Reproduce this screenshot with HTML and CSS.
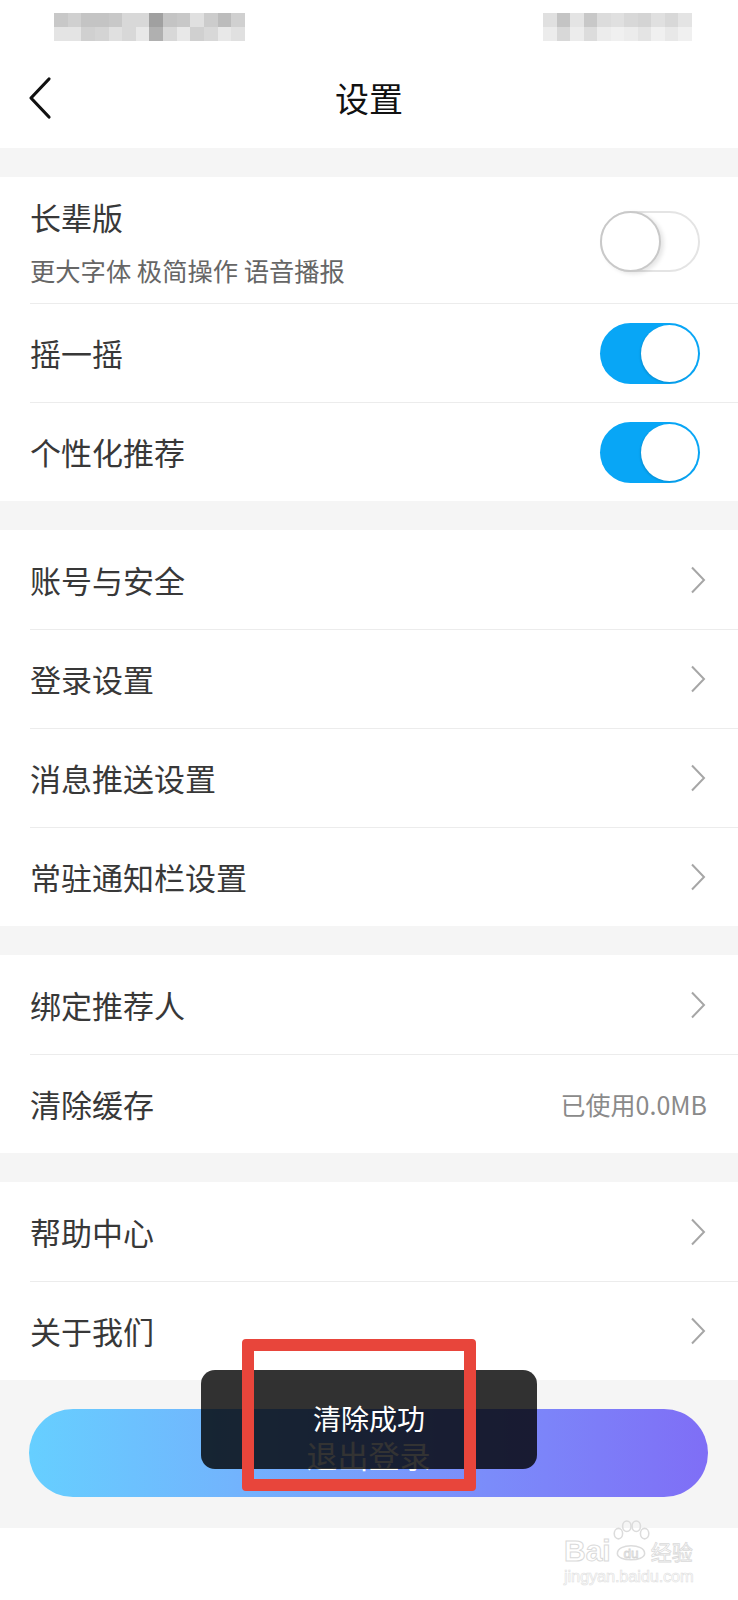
FILE: index.html
```html
<!DOCTYPE html>
<html lang="zh-CN">
<head>
<meta charset="utf-8">
<title>设置</title>
<link rel="stylesheet" href="styles.css">
</head>
<body>
<div class="page">
  <header class="header">
    <div class="status">
      <div class="blur blur-left">
        <i style="background:#c8c8c8"></i><i style="background:#d0d0d0"></i><i style="background:#c4c4c4"></i><i style="background:#c4c4c4"></i><i style="background:#c8c8c8"></i><i style="background:#d8d8d8"></i><i style="background:#d8d8d8"></i><i style="background:#a0a0a0"></i><i style="background:#c4c4c4"></i><i style="background:#c8c8c8"></i><i style="background:#e0e0e0"></i><i style="background:#cccccc"></i><i style="background:#bcbcbc"></i><i style="background:#d0d0d0"></i>
        <i style="background:#e4e4e4"></i><i style="background:#e4e4e4"></i><i style="background:#d0d0d0"></i><i style="background:#d4d4d4"></i><i style="background:#e0e0e0"></i><i style="background:#d8d8d8"></i><i style="background:#e8e8e8"></i><i style="background:#b0b0b0"></i><i style="background:#d8d8d8"></i><i style="background:#e8e8e8"></i><i style="background:#d0d0d0"></i><i style="background:#d8d8d8"></i><i style="background:#e8e8e8"></i><i style="background:#e0e0e0"></i>
      </div>
      <div class="blur blur-right">
        <i style="background:#e0e0e0"></i><i style="background:#c4c4c4"></i><i style="background:#e4e4e4"></i><i style="background:#c8c8c8"></i><i style="background:#dcdcdc"></i><i style="background:#e0e0e0"></i><i style="background:#d8d8d8"></i><i style="background:#d4d4d4"></i><i style="background:#e0e0e0"></i><i style="background:#d8d8d8"></i><i style="background:#e4e4e4"></i>
        <i style="background:#ececec"></i><i style="background:#d8d8d8"></i><i style="background:#ececec"></i><i style="background:#dcdcdc"></i><i style="background:#ececec"></i><i style="background:#f0f0f0"></i><i style="background:#ececec"></i><i style="background:#e4e4e4"></i><i style="background:#f0f0f0"></i><i style="background:#e8e8e8"></i><i style="background:#f0f0f0"></i>
      </div>
    </div>
    <div class="nav">
      <svg class="back" width="26" height="44" viewBox="0 0 26 44"><polyline points="22,3 4,22 22,41" fill="none" stroke="#111" stroke-width="3.2" stroke-linecap="round" stroke-linejoin="round"/></svg>
      <h1 class="title">设置</h1>
    </div>
  </header>

  <div class="gap"></div>
  <section class="group">
    <div class="row row-tall">
      <div class="label-col">
        <div class="label">长辈版</div>
        <div class="sub">更大字体 极简操作 语音播报</div>
      </div>
      <span class="switch off"><span class="knob"></span></span>
    </div>
    <div class="row">
      <div class="label">摇一摇</div>
      <span class="switch on"><span class="knob"></span></span>
    </div>
    <div class="row">
      <div class="label">个性化推荐</div>
      <span class="switch on"><span class="knob"></span></span>
    </div>
  </section>

  <div class="gap"></div>
  <section class="group">
    <div class="row"><div class="label">账号与安全</div><svg class="chev" width="16" height="28" viewBox="0 0 16 28"><polyline points="2,1.5 14,14 2,26.5" fill="none" stroke="#a6a6a6" stroke-width="2"/></svg></div>
    <div class="row"><div class="label">登录设置</div><svg class="chev" width="16" height="28" viewBox="0 0 16 28"><polyline points="2,1.5 14,14 2,26.5" fill="none" stroke="#a6a6a6" stroke-width="2"/></svg></div>
    <div class="row"><div class="label">消息推送设置</div><svg class="chev" width="16" height="28" viewBox="0 0 16 28"><polyline points="2,1.5 14,14 2,26.5" fill="none" stroke="#a6a6a6" stroke-width="2"/></svg></div>
    <div class="row"><div class="label">常驻通知栏设置</div><svg class="chev" width="16" height="28" viewBox="0 0 16 28"><polyline points="2,1.5 14,14 2,26.5" fill="none" stroke="#a6a6a6" stroke-width="2"/></svg></div>
  </section>

  <div class="gap"></div>
  <section class="group">
    <div class="row"><div class="label">绑定推荐人</div><svg class="chev" width="16" height="28" viewBox="0 0 16 28"><polyline points="2,1.5 14,14 2,26.5" fill="none" stroke="#a6a6a6" stroke-width="2"/></svg></div>
    <div class="row"><div class="label">清除缓存</div><span class="value">已使用0.0MB</span></div>
  </section>

  <div class="gap"></div>
  <section class="group">
    <div class="row"><div class="label">帮助中心</div><svg class="chev" width="16" height="28" viewBox="0 0 16 28"><polyline points="2,1.5 14,14 2,26.5" fill="none" stroke="#a6a6a6" stroke-width="2"/></svg></div>
    <div class="row"><div class="label">关于我们</div><svg class="chev" width="16" height="28" viewBox="0 0 16 28"><polyline points="2,1.5 14,14 2,26.5" fill="none" stroke="#a6a6a6" stroke-width="2"/></svg></div>
  </section>

  <div class="footer">
    <button class="logout">退出登录</button>
  </div>

  <div class="toast">清除成功</div>
  <div class="highlight"></div>

  <div class="watermark">
    <div class="wm-top">
      <span class="wm-bai">Bai</span>
      <svg class="wm-paw" width="44" height="44" viewBox="0 0 42 42">
        <g fill="none" stroke="#dcdcdc" stroke-width="1.5">
          <ellipse cx="9" cy="13" rx="4" ry="5"/>
          <ellipse cx="17" cy="6" rx="4" ry="5"/>
          <ellipse cx="26" cy="6" rx="4" ry="5"/>
          <ellipse cx="34" cy="13" rx="4" ry="5"/>
          <path d="M8 32 C8 22 34 22 34 32 C34 40 8 40 8 32 Z"/>
        </g>
        <text x="21" y="36" text-anchor="middle" font-size="13" fill="none" stroke="#d6d6d6" stroke-width="0.8" font-family="Liberation Sans, sans-serif">du</text>
      </svg>
      <span class="wm-jy">经验</span>
    </div>
    <div class="wm-url">jingyan.baidu.com</div>
  </div>
</div>
</body>
</html>
```

FILE: styles.css
```css
html, body {
  margin: 0;
  padding: 0;
  background: #ffffff;
}
body {
  font-family: "Noto Sans CJK SC", "Noto Sans", sans-serif;
  color: #333333;
}
.page {
  position: relative;
  width: 738px;
  min-height: 1600px;
  background: #ffffff;
}
.header {
  background: #ffffff;
}
.status {
  height: 48px;
  position: relative;
}
.blur {
  position: absolute;
  top: 13px;
  display: grid;
  grid-auto-rows: 14px;
}
.blur i {
  display: block;
}
.blur-left {
  left: 54px;
  grid-template-columns: repeat(14, 13.64px);
}
.blur-right {
  left: 543px;
  grid-template-columns: repeat(11, 13.55px);
}
.nav {
  height: 100px;
  display: flex;
  align-items: center;
  justify-content: center;
  position: relative;
}
.back {
  position: absolute;
  left: 27px;
  top: 28px;
}
.title {
  margin: 0;
  font-size: 34px;
  font-weight: normal;
  color: #111111;
  line-height: 44px;
}
.gap {
  height: 29px;
  background: #f5f5f5;
}
.group {
  background: #ffffff;
  padding-left: 30px;
}
.row {
  box-sizing: border-box;
  height: 99px;
  display: flex;
  align-items: center;
  justify-content: space-between;
  padding-right: 32px;
}
.row + .row {
  border-top: 1px solid #ececec;
}
.row-tall {
  height: 126px;
  padding-top: 2px;
}
.label {
  font-size: 31px;
  line-height: 40px;
  color: #383838;
}
.label-col {
  display: flex;
  flex-direction: column;
  gap: 18px;
}
.sub {
  font-size: 25.3px;
  line-height: 30px;
  color: #666666;
}
.value {
  font-size: 25px;
  color: #8a8a8a;
  margin-right: -1px;
}
.chev {
  display: block;
}
.switch {
  position: relative;
  display: block;
  box-sizing: border-box;
  width: 100px;
  height: 61px;
  border-radius: 31px;
  margin-right: 6px;
}
.switch.off {
  background: #ffffff;
  border: 2px solid #e4e4e4;
}
.switch.off .knob {
  position: absolute;
  left: -2px;
  top: -2px;
  width: 61px;
  height: 61px;
  box-sizing: border-box;
  border-radius: 50%;
  background: #ffffff;
  border: 2px solid #c9c9c9;
  box-shadow: 3px 2px 4px rgba(0,0,0,0.10);
}
.switch.on {
  background: #08a6f6;
}
.switch.on .knob {
  position: absolute;
  right: 2px;
  top: 2px;
  width: 57px;
  height: 57px;
  border-radius: 50%;
  background: #ffffff;
  box-shadow: -1px 1px 2px rgba(0,0,0,0.12);
}
.footer {
  background: #f5f5f5;
  padding: 29px 30px 31px 29px;
}
.logout {
  display: block;
  width: 100%;
  height: 88px;
  border: none;
  border-radius: 44px;
  background: linear-gradient(90deg, #66cfff 0%, #72b4fd 30%, #7a93fb 60%, #7f6ef6 100%);
  color: #ffffff;
  font-family: "Noto Sans CJK SC", sans-serif;
  font-size: 31px;
  padding: 0;
  padding-top: 2px;
}
.toast {
  position: absolute;
  left: 201px;
  top: 1370px;
  width: 336px;
  height: 99px;
  box-sizing: border-box;
  padding-bottom: 4px;
  border-radius: 14px;
  background: rgba(0, 0, 0, 0.8);
  color: #ffffff;
  font-size: 28px;
  display: flex;
  align-items: center;
  justify-content: center;
}
.highlight {
  position: absolute;
  left: 242px;
  top: 1339px;
  width: 234px;
  height: 152px;
  box-sizing: border-box;
  border: 12px solid #e8453b;
  border-radius: 4px;
}
.watermark {
  position: absolute;
  left: 564px;
  top: 1520px;
  width: 140px;
  color: transparent;
}
.wm-top {
  display: flex;
  align-items: flex-end;
  height: 44px;
}
.wm-bai {
  font-family: "Liberation Sans", sans-serif;
  font-size: 30px;
  line-height: 22px;
  font-weight: bold;
  -webkit-text-stroke: 1px #dadada;
  margin-bottom: 2px;
}
.wm-paw {
  display: block;
  margin: 0 -2px 0 -2px;
}
.wm-jy {
  font-size: 21px;
  line-height: 22px;
  -webkit-text-stroke: 0.8px #dadada;
  margin-bottom: 2px;
}
.wm-url {
  font-family: "Liberation Sans", sans-serif;
  font-size: 16.5px;
  line-height: 20px;
  margin-top: 2px;
  -webkit-text-stroke: 0.6px #e0e0e0;
  letter-spacing: -0.2px;
}
```
